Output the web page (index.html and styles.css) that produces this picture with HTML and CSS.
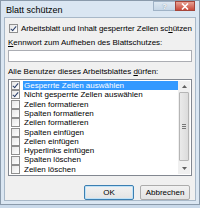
FILE: index.html
```html
<!DOCTYPE html>
<html lang="de">
<head>
<meta charset="utf-8">
<link rel="stylesheet" href="styles.css">
</head>
<body>
<div class="window">
  <div class="titlebar">
    <span class="title">Blatt schützen</span>
    <div class="tbuttons">
      <span class="tb help">?</span>
      <span class="tb close"><svg width="8" height="7" viewBox="0 0 8 7"><path d="M1 0.5 L7 6.5 M7 0.5 L1 6.5" stroke="#fff" stroke-width="1.6"/></svg></span>
    </div>
  </div>
  <div class="content">
    <label class="toprow"><span class="cb checked"></span><span>Arbeitsblatt und Inhalt gesperrter Zellen sc<u>h</u>ützen</span></label>
    <div class="lbl"><u>K</u>ennwort zum Aufheben des Blattschutzes:</div>
    <div class="input"></div>
    <div class="lbl lbl2">Alle Benutzer dieses Arbeitsblattes <u>d</u>ürfen:</div>
    <div class="listbox">
      <div class="items">
        <div class="item sel"><span class="cb checked"></span><span class="txt">Gesperrte Zellen auswählen</span></div>
        <div class="item"><span class="cb checked"></span><span class="txt">Nicht gesperrte Zellen auswählen</span></div>
        <div class="item"><span class="cb"></span><span class="txt">Zellen formatieren</span></div>
        <div class="item"><span class="cb"></span><span class="txt">Spalten formatieren</span></div>
        <div class="item"><span class="cb"></span><span class="txt">Zeilen formatieren</span></div>
        <div class="item"><span class="cb"></span><span class="txt">Spalten einfügen</span></div>
        <div class="item"><span class="cb"></span><span class="txt">Zeilen einfügen</span></div>
        <div class="item"><span class="cb"></span><span class="txt">Hyperlinks einfügen</span></div>
        <div class="item"><span class="cb"></span><span class="txt">Spalten löschen</span></div>
        <div class="item"><span class="cb"></span><span class="txt">Zeilen löschen</span></div>
      </div>
      <div class="scrollbar">
        <div class="arrow"><svg width="5" height="3" viewBox="0 0 5 3"><path d="M0 3 L2.5 0 L5 3 Z" fill="#606060"/></svg></div>
        <div class="track"><div class="thumb"><span class="grip"></span></div></div>
        <div class="arrow"><svg width="5" height="3" viewBox="0 0 5 3"><path d="M0 0 L2.5 3 L5 0 Z" fill="#606060"/></svg></div>
      </div>
    </div>
    <div class="buttons">
      <div class="btn ok">OK</div>
      <div class="btn">Abbrechen</div>
    </div>
  </div>
</div>
</body>
</html>
```
FILE: styles.css
```css
html, body { margin: 0; padding: 0; }
body { width: 200px; height: 208px; overflow: hidden; background: #c9d9ea; font-family: "Liberation Sans", Arial, sans-serif; font-size: 8px; color: #000; }
.window { box-sizing: border-box; width: 200px; height: 205px; border: 1px solid #8a9aab; background: #dae6f2; display: flex; flex-direction: column; }
.titlebar { height: 16px; display: flex; align-items: center; justify-content: space-between; padding-left: 5px; flex: none; }
.title { font-size: 9px; color: #000; margin-top: 1px; }
.tbuttons { display: flex; align-self: flex-start; margin-right: 4px; }
.tb { width: 20px; height: 10px; display: flex; align-items: center; justify-content: center; box-sizing: border-box; }
.help { background: linear-gradient(#dde8f2, #c6d6e6); border: 1px solid #9fb2c6; border-right: none; color: #fff; font-size: 8px; font-weight: bold; text-shadow: 0 0 1px #5a6e82; width: 22px; }
.close { background: linear-gradient(#e8a194, #c9493a); border: 1px solid #a5453a; width: 20px; }
.content { flex: 1; background: #f0f0f0; margin: 0 3px 3px 3px; border: 1px solid #a8b8c8; display: flex; flex-direction: column; padding: 5px 3px 0 3px; white-space: nowrap; overflow: hidden; }
.toprow { display: flex; align-items: center; gap: 3px; height: 11px; margin-left: 1px; letter-spacing: -0.07px; }
.cb { width: 9px; height: 9px; box-sizing: border-box; border: 1px solid #8f8f8f; background: linear-gradient(135deg, #e6e6e6, #fff); flex: none; position: relative; }
.cb.checked::after { content: ""; position: absolute; left: 2px; top: 0px; width: 2px; height: 5px; border: solid #2a3f6a; border-width: 0 1.3px 1.3px 0; transform: rotate(40deg); }
.lbl { margin-top: 5px; height: 10px; line-height: 10px; }
.lbl2 { margin-top: 5px; }
.input { height: 13px; margin-top: 2px; background: #fff; border: 1px solid #abadb3; box-sizing: border-box; }
.listbox { margin-top: 2px; height: 98px; background: #fff; border: 1px solid #828790; box-sizing: border-box; display: flex; padding: 1px; }
.items { flex: 1; display: flex; flex-direction: column; padding-top: 0; }
.item { height: 9.3px; min-height: 0; flex: none; display: flex; align-items: center; gap: 3px; padding-left: 1px; }
.item .txt { height: 9.3px; line-height: 9.3px; padding: 0 1px; }
.item.sel .txt { background: #3399ff; color: #fff; flex: 1; }
.scrollbar { width: 12px; display: flex; flex-direction: column; background: #f0f0f0; }
.arrow { height: 11px; display: flex; align-items: center; justify-content: center; }
.track { flex: 1; display: flex; padding: 0 1px; }
.thumb { flex: 1; margin-bottom: 2px; background: linear-gradient(90deg, #eaeaea, #dcdcdc); border: 1px solid #b5b5b5; border-radius: 1px; display: flex; align-items: center; justify-content: center; }
.grip { width: 4px; height: 5px; background: repeating-linear-gradient(#777 0 1px, transparent 1px 2px); }
.buttons { display: flex; justify-content: flex-end; gap: 6px; margin-top: 9px; margin-right: 2px; }
.btn { width: 50px; height: 15px; box-sizing: border-box; border: 1px solid #acacac; border-radius: 2px; background: linear-gradient(#f2f2f2, #e3e3e3); display: flex; align-items: center; justify-content: center; font-size: 8px; }
.btn.ok { border-color: #3c7fb1; box-shadow: inset 0 0 0 1px #bfe2f8; }
```
